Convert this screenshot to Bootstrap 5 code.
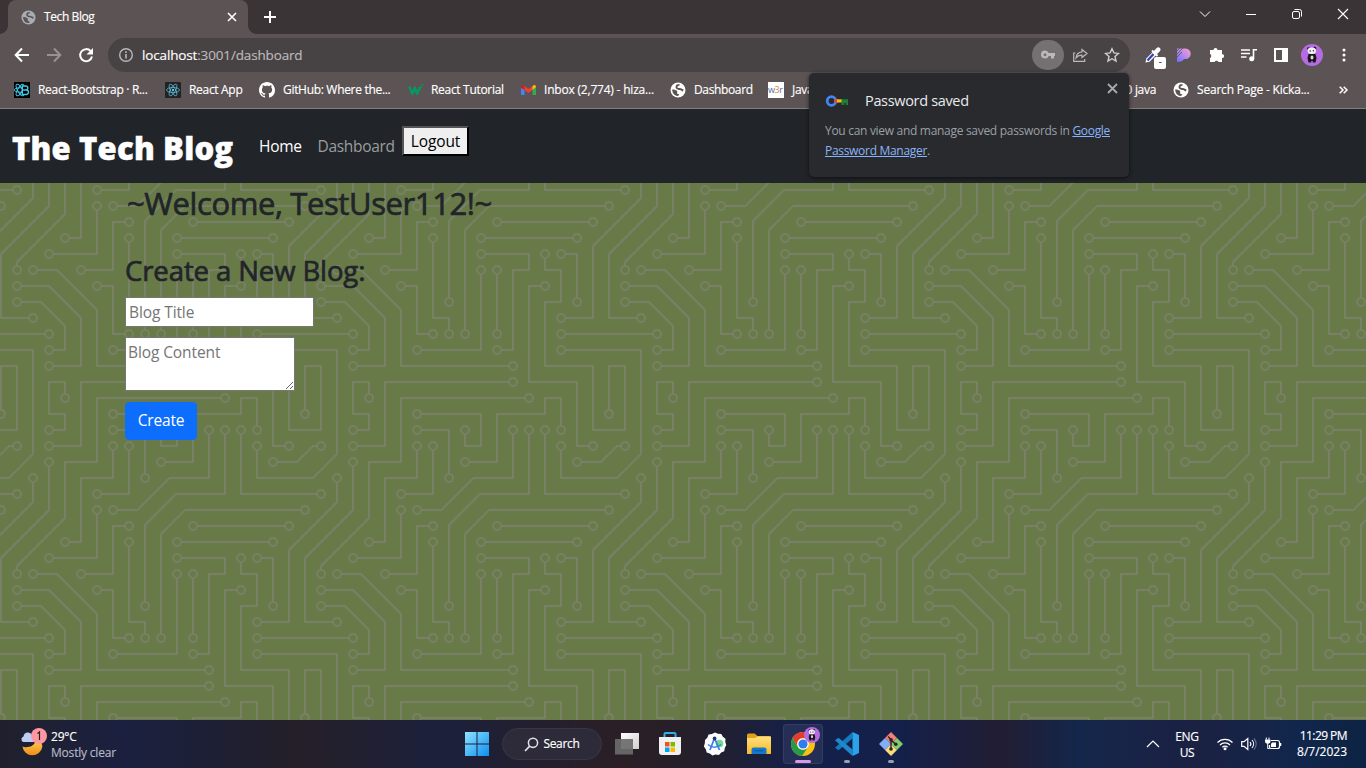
<!DOCTYPE html>
<html lang="en">
<head>
<meta charset="utf-8">
<meta name="viewport" content="width=device-width, initial-scale=1">
<title>Tech Blog</title>
<link href="https://cdn.jsdelivr.net/npm/bootstrap@5.3.0/dist/css/bootstrap.min.css" rel="stylesheet">
<style>
  body { font-family: "Open Sans", "Noto Sans", sans-serif; height: 768px; overflow: hidden; background: #5c5354; }
  svg { display: block; flex: none; overflow: visible; }
  .ui { font-size: 12px; line-height: 16px; letter-spacing: -.31px; white-space: nowrap; color: #fff; -webkit-text-stroke: .15px; }

  /* browser tab strip */
  .strip { height: 34px; background: #3b3436; padding-left: 8px; }
  .tab { width: 240px; background: #5c5354; border-radius: 8px 8px 0 0; padding: 0 10px 0 13px; position: relative; }
  .tab::before, .tab::after { content: ""; position: absolute; bottom: 0; width: 8px; height: 8px; }
  .tab::before { left: -8px; background: radial-gradient(circle at 0 0, transparent 7.5px, #5c5354 8px); }
  .tab::after { right: -8px; background: radial-gradient(circle at 100% 0, transparent 7.5px, #5c5354 8px); }
  .winctl { gap: 30px; padding: 0 15px 6px 0; }

  /* toolbar */
  .tools { height: 42px; padding: 0 14px; }
  .omni { width: 1022px; height: 34px; border-radius: 17px; background: #474243; margin-left: 14px; padding: 0 10px 0 10px; }
  .url { font-size: 13.5px; letter-spacing: -.15px; color: #bdb9ba; margin-left: 8px; }
  .keydot { width: 32px; height: 30px; border-radius: 16px; background: #757071; }
  .badge-dash { position: absolute; left: 10px; top: 11px; width: 12px; height: 12px; border-radius: 2px; background: #fff; color: #333; font-size: 9px; line-height: 10px; text-align: center; }

  /* bookmarks */
  .marks { height: 33px; padding: 0 0 4px 14px; border-bottom: 1px solid #837c7d; display: grid; grid-template-columns: 151px 94px 149px 113px 149px 98px 345px 60px 166px auto; align-items: center; }
  .marks > div { display: flex; align-items: center; gap: 8px; overflow: hidden; }

  /* password bubble */
  .bubble { position: absolute; left: 809px; top: 73px; width: 320px; height: 104px; background: #292a2d; border-radius: 5px; padding: 18px 16px 0; box-shadow: 0 1px 4px rgba(0,0,0,.6); z-index: 5; }
  .bubble h6 { font-size: 14.5px; line-height: 20px; font-weight: 400; letter-spacing: -.33px; color: #e8eaed; margin: 0 0 0 16px; }
  .bubble p { font-size: 12px; line-height: 20px; letter-spacing: -.3px; color: #9aa0a6; margin: 10px 0 0; white-space: nowrap; }
  .bubble a { color: #8ab4f8; }
  .bubble-x { position: absolute; right: 11px; top: 10px; }

  /* page */
  .page { height: 611px; background-color: #687a48; background-image: url("data:image/svg+xml,%3Csvg xmlns='http://www.w3.org/2000/svg' width='304' height='304' viewBox='0 0 304 304'%3E%3Cpath fill='%23788066' d='M44.1 224a5 5 0 1 1 0 2H0v-2h44.1zm160 48a5 5 0 1 1 0 2H82v-2h122.1zm57.8-46a5 5 0 1 1 0-2H304v2h-42.1zm0 16a5 5 0 1 1 0-2H304v2h-42.1zm6.2-114a5 5 0 1 1 0 2h-86.2a5 5 0 1 1 0-2h86.2zm-256-48a5 5 0 1 1 0 2H0v-2h12.1zm185.8 34a5 5 0 1 1 0-2h86.2a5 5 0 1 1 0 2h-86.2zM258 12.1a5 5 0 1 1-2 0V0h2v12.1zm-64 208a5 5 0 1 1-2 0v-54.2a5 5 0 1 1 2 0v54.2zm48-198.2V80h62v2h-64V21.9a5 5 0 1 1 2 0zm16 16V64h46v2h-48V37.9a5 5 0 1 1 2 0zm-128 96V208h16v12.1a5 5 0 1 1-2 0V210h-16v-76.1a5 5 0 1 1 2 0zm-5.9-21.9a5 5 0 1 1 0 2H114v48H85.9a5 5 0 1 1 0-2H112v-48h12.1zm-6.2 130a5 5 0 1 1 0-2H176v-74.1a5 5 0 1 1 2 0V242h-60.1zm-16-64a5 5 0 1 1 0-2H114v48h10.1a5 5 0 1 1 0 2H112v-48h-10.1zM66 284.1a5 5 0 1 1-2 0V274H50v30h-2v-32h18v12.1zM236.1 176a5 5 0 1 1 0 2H226v94h48v32h-2v-30h-48v-98h12.1zm25.8-30a5 5 0 1 1 0-2H274v44.1a5 5 0 1 1-2 0V146h-10.1zm-64 96a5 5 0 1 1 0-2H208v-80h16v-14h-42.1a5 5 0 1 1 0-2H226v18h-16v80h-12.1zm86.2-210a5 5 0 1 1 0 2H272V0h2v32h10.1zM98 101.9V146H53.9a5 5 0 1 1 0-2H96v-42.1a5 5 0 1 1 2 0zM53.9 34a5 5 0 1 1 0-2H80V0h2v34H53.9zm60.1 3.9V66H82v64H69.9a5 5 0 1 1 0-2H80V64h32V37.9a5 5 0 1 1 2 0zM101.9 82a5 5 0 1 1 0-2H128V37.9a5 5 0 1 1 2 0V82h-28.1zm16-64a5 5 0 1 1 0-2H146v44.1a5 5 0 1 1-2 0V18h-26.1zm102.2 270a5 5 0 1 1 0 2H98v14h-2v-16h124.1zM242 149.9V160h16v34h-16v62h48v48h-2v-46h-48v-66h16v-30h-16v-12.1a5 5 0 1 1 2 0zM53.9 18a5 5 0 1 1 0-2H64V2H48V0h18v18H53.9zm112 32a5 5 0 1 1 0-2H192V0h50v2h-48v48h-28.1zm-48-48a5 5 0 0 1-9.8-2h2.07a3 3 0 1 0 5.66 0H178v34h-18V21.9a5 5 0 1 1 2 0V32h14V2h-58.1zm0 96a5 5 0 1 1 0-2H137l32-32h39V21.9a5 5 0 1 1 2 0V66h-40.17l-32 32H117.9zm28.1 90.1a5 5 0 1 1-2 0v-76.51L175.59 80H224V21.9a5 5 0 1 1 2 0V82h-49.59L146 112.41v75.69zm16 32a5 5 0 1 1-2 0v-99.51L184.59 96H300.1a5 5 0 0 1 3.9-3.9v2.07a3 3 0 0 0 0 5.66v2.07a5 5 0 0 1-3.9-3.9H185.41L162 121.41v98.69zm-144-64a5 5 0 1 1-2 0v-3.51l48-48V48h32V0h2v50H66v55.41l-48 48v2.69zM50 53.9v43.51l-48 48V208h26.1a5 5 0 1 1 0 2H0v-65.41l48-48V53.9a5 5 0 1 1 2 0zm-16 16V89.41l-34 34v-2.82l32-32V69.9a5 5 0 1 1 2 0zM12.1 32a5 5 0 1 1 0 2H9.41L0 43.41V40.6L8.59 32h3.51zm265.8 18a5 5 0 1 1 0-2h18.69l7.41-7.41v2.82L297.41 50H277.9zm-16 160a5 5 0 1 1 0-2H288v-71.41l16-16v2.82l-14 14V210h-28.1zm-208 32a5 5 0 1 1 0-2H64v-22.59L40.59 194H21.9a5 5 0 1 1 0-2H41.41L66 216.59V242H53.9zm150.2 14a5 5 0 1 1 0 2H96v-56.6L56.6 162H37.9a5 5 0 1 1 0-2h19.5L98 200.6V256h106.1zm-150.2 2a5 5 0 1 1 0-2H80v-46.59L48.59 178H21.9a5 5 0 1 1 0-2H49.41L82 208.59V258H53.9zM34 39.8v1.61L9.41 66H0v-2h8.59L32 40.59V0h2v39.8zM2 300.1a5 5 0 0 1 3.9 3.9H3.83A3 3 0 0 0 0 302.17V256h18v48h-2v-46H2v42.1zM34 241v63h-2v-62H0v-2h34v1zM17 18H0v-2h16V0h2v18h-1zm273-2h14v2h-16V0h2v16zm-32 273v15h-2v-14h-14v14h-2v-16h18v1zM0 92.1A5.02 5.02 0 0 1 6 97a5 5 0 0 1-6 4.9v-2.07a3 3 0 1 0 0-5.66V92.1zM80 272h2v32h-2v-32zm37.9 32h-2.07a3 3 0 0 0-5.66 0h-2.07a5 5 0 0 1 9.8 0zM5.9 0A5.02 5.02 0 0 1 0 5.9V3.83A3 3 0 0 0 3.83 0H5.9zm294.2 0h2.07A3 3 0 0 0 304 3.83V5.9a5 5 0 0 1-3.9-5.9zm3.9 300.1v2.07a3 3 0 0 0-1.83 1.83h-2.07a5 5 0 0 1 3.9-3.9z'/%3E%3Cpath stroke='%23687a48' stroke-width='6' stroke-linecap='round' d='M49 225h0M209 273h0M257 225h0M257 241h0M273 129h0M177 129h0M17 81h0M193 113h0M289 113h0M257 17h0M193 225h0M193 161h0M241 17h0M257 33h0M129 129h0M145 225h0M129 113h0M81 161h0M113 241h0M177 161h0M97 177h0M129 225h0M65 289h0M241 177h0M257 145h0M273 193h0M193 241h0M177 145h0M289 33h0M49 145h0M97 97h0M49 33h0M113 33h0M65 129h0M97 81h0M129 33h0M113 17h0M145 65h0M225 289h0M241 145h0M49 17h0M161 49h0M161 17h0M113 97h0M209 17h0M145 193h0M225 17h0M161 225h0M17 161h0M49 49h0M33 209h0M33 65h0M17 33h0M273 49h0M257 209h0M49 241h0M17 193h0M209 257h0M33 161h0M49 257h0M17 177h0'/%3E%3C/svg%3E"); }
  .topnav { height: 74px; background: #212529; padding: 0 12px; }
  .brandname { font-size: 31px; font-weight: 800; letter-spacing: .2px; line-height: 48px; color: #fff; width: 231px; white-space: nowrap; padding-top: 3px; -webkit-text-stroke: .5px; }
  .navtxt { font-size: 15.5px; line-height: 24px; letter-spacing: -.3px; padding: 0 8px; }
  .logout { font-size: 15.5px; line-height: 24px; letter-spacing: -.1px; width: 67px; height: 30px; padding: 0; background: #efefef; border: 2px outset #000; border-color: #555 #000 #000 #555; color: #000; margin-bottom: 11px; }
  .hello { font-size: 31px; line-height: 38px; font-weight: 400; letter-spacing: -.4px; margin: 1px 0 32px 2px; white-space: nowrap; -webkit-text-stroke: .7px; }
  .newblog { font-size: 27.5px; line-height: 34px; font-weight: 400; letter-spacing: -.1px; margin: 0 0 9px; white-space: nowrap; -webkit-text-stroke: .7px; }
  .fld { display: block; border: 1px solid #767676; border-radius: 0; font-size: 15.5px; line-height: 24px; letter-spacing: -.1px; background: #fff; }
  .fld::placeholder { color: #757575; opacity: 1; }
  .fld-title { width: 189px; height: 30px; padding: 1px 3px; margin-bottom: 10px; }
  .fld-body { width: 170px; height: 54px; padding: 2px; margin-bottom: 11px; overflow: hidden; }
  .create { width: 72px; height: 38px; padding: 0; font-size: 15.5px; letter-spacing: -.15px; background: #0d6efd; border-color: #0d6efd; border-radius: 4px; }

  /* taskbar */
  .taskbar { height: 48px; background: linear-gradient(90deg, #20202c 0, #1b2040 125px, #1c1f35 200px, #241f28 300px, #1b203b 440px, #2b1f25 620px, #241f2b 700px, #14204a 800px, #14204a 900px, #211d32 1000px, #14264b 1080px, #1b2142 1200px, #11264c 1300px, #0d2342 1366px); }
  .pill { width: 100px; height: 32px; border-radius: 16px; background: #2d2a39; border: 1px solid #393644; margin-left: 13px; }
  .appbox { width: 40px; height: 40px; border-radius: 4px; background: #252e54; box-shadow: inset 0 0 0 1px #343c60; margin-left: 12px; position: relative; }
  .runbar { position: absolute; bottom: 1px; left: 50%; height: 3px; width: 6px; margin-left: -3px; border-radius: 2px; background: #9a9db0; }
  .app { height: 40px; width: 24px; position: relative; display: flex; align-items: center; }
</style>
</head>
<body>
<svg width="0" height="0" class="position-absolute">
  <defs>
    <symbol id="globe" viewBox="0 0 16 16"><circle cx="8" cy="8" r="7.5" fill="currentColor"/><path d="M2.2 7.5c2 .1 3.300.3 4.700 1.300 1 .9-.1 1.700.3 2.700.4.8 1.700.2 2 1.100.1.800-1 1.300-1.900 1.300C4.500 13.700 2.200 11 2.200 7.500zM6.700 2.500c1-.4 2.500-.2 3.300.2-.4 1.200-2.200 1-2.600 2-.3 1.100 1.200 1.300 2.200 1.300 1.400 0 2.500 1 3.900 1.300-.1 1-.3 1.500-.6 2.200-1.200-.3-1.600-1.500-3-1.500-1.300 0-3.500-.6-4.200-2.100-.4-1.200.2-2.500 1-3.400z" fill="#5c5354"/></symbol>
    <symbol id="panda" viewBox="0 0 22 22"><circle cx="11" cy="11" r="11" fill="#b56ce0"/><path d="M7.500 10h7l1 4-1 4.500h-2.700v-1.500h-1.600v1.500H7.500l-1-4.500z" fill="#18151b"/><circle cx="7.600" cy="4.600" r="1.400" fill="#18151b"/><circle cx="13.800" cy="4.200" r="1.400" fill="#18151b"/><ellipse cx="10.800" cy="6.800" rx="4.200" ry="3.200" fill="#f4f1f4"/><circle cx="9.200" cy="7" r=".8" fill="#333"/><circle cx="12.400" cy="6.800" r=".8" fill="#333"/><ellipse cx="11" cy="13.500" rx="1.500" ry="2" fill="#ddd8de"/></symbol>
    <symbol id="atom" viewBox="0 0 16 16"><g fill="none" stroke="#61c8e5" stroke-width=".7"><ellipse cx="8" cy="8" rx="6.500" ry="2.500"/><ellipse cx="8" cy="8" rx="6.500" ry="2.500" transform="rotate(60 8 8)"/><ellipse cx="8" cy="8" rx="6.500" ry="2.500" transform="rotate(120 8 8)"/></g><circle cx="8" cy="8" r="1.200" fill="#61c8e5"/></symbol>
    <linearGradient id="win" x1="0" y1="0" x2="1" y2="1"><stop offset="0" stop-color="#8fe3ff"/><stop offset="1" stop-color="#0a8ff0"/></linearGradient>
    <linearGradient id="moon" x1="0" y1="0" x2="0" y2="1"><stop offset="0" stop-color="#ffcf4d"/><stop offset="1" stop-color="#f08a1a"/></linearGradient>
    <linearGradient id="swirl" x1="1" y1="0" x2="0" y2="1"><stop offset="0" stop-color="#ff9fc4"/><stop offset=".5" stop-color="#b78bef"/><stop offset="1" stop-color="#6a6cff"/></linearGradient>
    <linearGradient id="fold" x1="0" y1="0" x2="0" y2="1"><stop offset="0" stop-color="#ffe082"/><stop offset="1" stop-color="#f9b91f"/></linearGradient>
    <linearGradient id="pane" x1="0" y1="0" x2="1" y2="1"><stop offset="0" stop-color="#fff"/><stop offset="1" stop-color="#cfcfcf"/></linearGradient>
  </defs>
</svg>

<header class="ui">
  <div class="strip d-flex">
    <div class="tab d-flex align-items-center">
      <svg width="15" height="15" style="color:#a9acb1"><use href="#globe"/></svg>
      <span class="ms-2 flex-grow-1" style="letter-spacing:-.4px">Tech Blog</span>
      <svg width="12" height="12" viewBox="0 0 12 12"><path d="M2 2l8 8M10 2l-8 8" stroke="#fff" stroke-width="1.600"/></svg>
    </div>
    <svg class="align-self-center ms-3" width="12" height="12" viewBox="0 0 12 12"><path d="M6 0v12M0 6h12" stroke="#fff" stroke-width="2"/></svg>
    <div class="winctl d-flex align-items-center ms-auto">
      <svg width="16" height="16" viewBox="0 0 16 16"><path d="M3 5.500l5 5 5-5" fill="none" stroke="#fff"/></svg>
      <svg width="16" height="16" viewBox="0 0 16 16"><path d="M3 8.500h10" stroke="#fff"/></svg>
      <svg width="16" height="16" viewBox="0 0 16 16"><rect x="3.500" y="5.500" width="7" height="7" rx="1.500" fill="none" stroke="#fff"/><path d="M5.500 3.500h5a2 2 0 0 1 2 2v5" fill="none" stroke="#fff"/></svg>
      <svg width="16" height="16" viewBox="0 0 16 16"><path d="M3 3l10 10M13 3L3 13" stroke="#fff" stroke-width="1.100"/></svg>
    </div>
  </div>

  <div class="tools d-flex align-items-center">
    <svg width="16" height="16" viewBox="0 0 16 16"><path d="M15 8H2M8 1.500L1.700 8 8 14.500" fill="none" stroke="#fff" stroke-width="2"/></svg>
    <svg class="ms-3" width="16" height="16" viewBox="0 0 16 16"><path d="M1 8h13M8 1.500L14.300 8 8 14.500" fill="none" stroke="#989293" stroke-width="2"/></svg>
    <svg class="ms-3" width="16" height="16" viewBox="0 0 16 16"><path d="M12.700 4.200A6 6 0 1 0 14 9.500" fill="none" stroke="#fff" stroke-width="2"/><path d="M15 1v6.500H8.500z" fill="#fff"/></svg>
    <div class="omni d-flex align-items-center">
      <svg width="16" height="16" viewBox="0 0 16 16"><circle cx="8" cy="8" r="6.300" fill="none" stroke="#b9b6b7" stroke-width="1.400"/><path d="M8 7v4.500M8 4.200v1.700" stroke="#b9b6b7" stroke-width="1.600"/></svg>
      <span class="url"><span class="text-white">localhost</span>:3001/dashboard</span>
      <div class="keydot ms-auto d-flex align-items-center justify-content-center me-2">
        <svg width="16" height="16" viewBox="0 0 16 16"><path fill-rule="evenodd" d="M5 3.500a4 4 0 1 0 3.700 5.500H11v2.500h3V9h1V6H8.700A4 4 0 0 0 5 3.500zm0 2.700a1.500 1.500 0 1 1 0 3 1.500 1.500 0 0 1 0-3z" fill="#bcb9ba"/></svg>
      </div>
      <svg width="16" height="16" viewBox="0 0 16 16"><path d="M3.500 6H1.700v8.300h11V12M10 2.500l5 4-5 4V8.200C7.500 8 5.500 9 4 11c.3-3.500 2.300-5.800 6-6.200z" fill="none" stroke="#bcb9ba" stroke-width="1.200"/></svg>
      <svg class="ms-3" width="16" height="16" viewBox="0 0 16 16"><path d="M8 1.700l1.900 4.200 4.500.5-3.400 3.100 1 4.600-4-2.400-4 2.400 1-4.600L1.600 6.400l4.500-.5z" fill="none" stroke="#d0cdce" stroke-width="1.400"/></svg>
    </div>
    <div class="position-relative" style="margin-left:14px">
      <svg width="18" height="18" viewBox="0 0 18 18"><path d="M1.500 16.500l.8-4L9 5.800 12.200 9l-6.700 6.700z" fill="#fff"/><path d="M3.500 14.500L9.500 8" stroke="#3347b8" stroke-width="2.400"/><path d="M8 4.500L13.500 10" stroke="#fff" stroke-width="2"/><path d="M11.500 6.500L14.300 3.700" stroke="#fff" stroke-width="4.500" stroke-linecap="round"/></svg>
      <span class="badge-dash">-</span>
    </div>
    <svg style="margin-left:14px" width="16" height="16" viewBox="0 0 16 16"><path d="M1 1.500h8.500a5 5 0 0 1 0 10.500H8c-1 2-3.500 3-7 3z" fill="url(#swirl)"/><path d="M0 5l5-5M0 8l8-8M0 11L6 5" stroke="#5c5354" stroke-width=".9"/></svg>
    <svg style="margin-left:17px" width="16" height="16" viewBox="0 0 16 16"><path d="M6.500 1a2 2 0 0 1 2 2H13v4.300a2 2 0 0 1 0 3.600V15H9.500a2.200 2.200 0 0 0-4 0H1v-4a2.200 2.200 0 0 0 0-4V3h3.500a2 2 0 0 1 2-2z" fill="#fff"/><circle cx="13.300" cy="9.100" r="1.900" fill="#fff"/></svg>
    <svg class="ms-3" width="16" height="16" viewBox="0 0 16 16"><path d="M0 3h9M0 6.500h9M0 10h5.500M12.500 12V2.800H16" fill="none" stroke="#fff" stroke-width="1.600"/><circle cx="10.700" cy="11.800" r="2.500" fill="#fff"/></svg>
    <svg class="ms-3" width="16" height="16" viewBox="0 0 16 16"><path fill-rule="evenodd" d="M1 1h14v14H1zm2 2v10h6V3z" fill="#fff"/></svg>
    <svg style="margin-left:12px" width="22" height="22"><use href="#panda"/></svg>
    <svg style="margin-left:13px" width="16" height="16" viewBox="0 0 16 16"><g fill="#fff"><circle cx="8" cy="3" r="1.500"/><circle cx="8" cy="8" r="1.500"/><circle cx="8" cy="13" r="1.500"/></g></svg>
  </div>

  <nav class="marks">
    <div><svg width="16" height="16" viewBox="0 0 16 16"><rect width="16" height="16" fill="#000"/><g fill="none" stroke="#41c9e8"><ellipse cx="6" cy="8" rx="5.800" ry="2.200"/><ellipse cx="6" cy="8" rx="6.500" ry="2.300" transform="rotate(60 6 8)"/><ellipse cx="6" cy="8" rx="6.500" ry="2.300" transform="rotate(-60 6 8)"/></g><path d="M8.300 4h3.500a2 2 0 0 1 0 4H8.300zM8.300 8h4a2.200 2.200 0 0 1 0 4.500h-4z" fill="#000" stroke="#41c9e8" stroke-width="1.400"/></svg><span>React-Bootstrap · R...</span></div>
    <div><svg width="16" height="16"><rect width="16" height="16" rx="1" fill="#222"/><use href="#atom"/></svg><span>React App</span></div>
    <div><svg width="16" height="16" viewBox="0 0 16 16"><path fill="#fff" d="M8 0C3.580 0 0 3.580 0 8c0 3.540 2.290 6.530 5.470 7.590.4.070.55-.17.55-.38 0-.19-.01-.82-.01-1.490-2.010.37-2.530-.49-2.690-.94-.09-.23-.48-.94-.82-1.130-.28-.15-.68-.52-.01-.53.63-.01 1.080.58 1.230.82.72 1.210 1.870.87 2.330.66.070-.52.280-.87.510-1.070-1.780-.2-3.640-.89-3.640-3.950 0-.87.310-1.590.82-2.150-.08-.2-.36-1.020.08-2.120 0 0 .67-.21 2.200.82.64-.18 1.320-.27 2-.27s1.360.09 2 .27c1.530-1.040 2.200-.82 2.200-.82.44 1.100.16 1.920.08 2.120.51.560.82 1.270.82 2.150 0 3.070-1.870 3.750-3.650 3.950.29.25.54.73.54 1.480 0 1.070-.01 1.930-.01 2.200 0 .21.15.46.55.38A8.010 8.010 0 0 0 16 8c0-4.420-3.580-8-8-8z"/></svg><span>GitHub: Where the...</span></div>
    <div><svg width="16" height="16" viewBox="0 0 16 16"><path d="M0 4.500h2.700L4.300 8.500 6 4.500h1.500l1.800 4 1.700-4h2.500L10 13H8.500L6.700 9.500 5 13H3.500z" fill="#059862"/><path d="M13 2.500h2l-1 1.200c1 0 1.300 1.800-.8 1.800" fill="none" stroke="#059862" stroke-width=".8"/></svg><span style="margin-left:-1px">React Tutorial</span></div>
    <div><svg width="15" height="16" viewBox="0 0 15 16"><path d="M0 4v9h3.500V7z" fill="#4285f4"/><path d="M15 4v9h-3.500V7z" fill="#34a853"/><path d="M0 4.500L2 3l5.500 4L13 3l-1 4.500-4.500 3.500L0 5.500z" fill="#ea4335"/><path d="M11.500 4.200L13 3c1 0 2 .5 2 2l-3.500 3z" fill="#fbbc04"/><path d="M0 4.500c0-1.500 2-2 2.500-1.200l1 1v3.800L0 5.500z" fill="#c5221f"/></svg><span style="letter-spacing:-.2px">Inbox (2,774) - hiza...</span></div>
    <div><svg width="16" height="16" class="text-white"><use href="#globe"/></svg><span style="letter-spacing:-.36px">Dashboard</span></div>
    <div><svg width="16" height="16" viewBox="0 0 16 16"><rect width="16" height="16" fill="#fff"/><text x="0" y="11" font-size="9" letter-spacing="-.4" fill="#3f6fb0">w<tspan fill="#e77c40">3</tspan>r</text></svg><span>Java</span></div>
    <div class="justify-content-end" style="padding-right:17px"><span>20 java</span></div>
    <div><svg width="16" height="16" class="text-white"><use href="#globe"/></svg><span style="letter-spacing:-.2px">Search Page - Kicka...</span></div>
    <div><svg width="9" height="8" viewBox="0 0 9 8"><path d="M.7.700L4 4 .7 7.300M4.700.700L8 4 4.700 7.300" fill="none" stroke="#fff" stroke-width="1.500"/></svg></div>
  </nav>
</header>

<aside class="bubble">
  <div class="d-flex align-items-center">
    <svg width="24" height="20" viewBox="0 0 24 20"><circle cx="6.500" cy="10" r="4.300" fill="none" stroke="#4285f4" stroke-width="2.800"/><path d="M9 8.300h4v3.200H9z" fill="#ea4335"/><path d="M12 8.300h5v3.200h-5z" fill="#fbbc04"/><path d="M16.500 8.300h6.500V14h-2.200v-2h-1.500v2h-2.800z" fill="#188038"/></svg>
    <h6>Password saved</h6>
  </div>
  <p>You can view and manage saved passwords in <a href="#">Google<br>Password Manager</a>.</p>
  <svg class="bubble-x" width="11" height="11" viewBox="0 0 11 11"><path d="M1 1l9 9M10 1l-9 9" stroke="#a4a8ad" stroke-width="1.900"/></svg>
</aside>

<div class="page">
  <nav class="topnav d-flex align-items-center">
    <div class="brandname">The Tech Blog</div>
    <div class="d-flex align-items-center" style="margin-left:8px">
      <div class="navtxt text-white" style="width:58.500px">Home</div>
      <div class="navtxt" style="width:92.500px;color:#9b9d9e">Dashboard</div>
      <button class="logout">Logout</button>
    </div>
  </nav>
  <main class="container">
    <h2 class="hello">~Welcome, TestUser112!~</h2>
    <h3 class="newblog">Create a New Blog:</h3>
    <input class="fld fld-title" placeholder="Blog Title">
    <textarea class="fld fld-body" placeholder="Blog Content"></textarea>
    <button class="btn btn-primary create">Create</button>
  </main>
</div>

<footer class="taskbar ui d-flex align-items-center">
  <div class="d-flex align-items-center" style="width:465px;padding-left:20px">
    <svg style="margin-top:-5px" width="27" height="28" viewBox="0 0 27 28"><path d="M2.500 18.500c3 1.500 12 1 13-6 1.500-1 7 .5 6.800 6.500A10 10 0 0 1 2.500 18.500z" fill="url(#moon)"/><path d="M3 14a3 3 0 0 1 .5-5.500 4.500 4.500 0 0 1 8.500-1.500 3.500 3.500 0 0 1 1 7z" fill="#b9cdf5"/><circle cx="19" cy="8" r="8" fill="#ff97a0"/><path d="M17.500 5.500L19.500 4v8" fill="none" stroke="#222" stroke-width="1.200"/></svg>
    <div style="margin-left:4px;letter-spacing:-.2px;padding-top:2px"><div>29°C</div><div style="color:#b7b8c4">Mostly clear</div></div>
  </div>
  <svg width="24" height="24" viewBox="0 0 24 24"><path d="M0 0h11.500v11.500H0zM12.500 0H24v11.500H12.500zM0 12.500h11.500V24H0zM12.500 12.500H24V24H12.500z" fill="url(#win)"/></svg>
  <div class="pill d-flex align-items-center justify-content-center">
    <svg width="15" height="15" viewBox="0 0 15 15"><circle cx="9" cy="5.800" r="4.600" fill="none" stroke="#e4e3ea" stroke-width="1.500"/><path d="M5.700 9.200L1 14" stroke="#e4e3ea" stroke-width="1.700"/></svg>
    <span style="margin-left:4px">Search</span>
  </div>
  <svg style="margin-left:13px" width="24" height="24" viewBox="0 0 24 24"><path d="M6 1h18v16H6z" fill="url(#pane)"/><path d="M0 7h18v15.500H0z" fill="#6b6b6b" opacity=".92"/></svg>
  <svg style="margin-left:19px" width="24" height="24" viewBox="0 0 24 24"><path d="M6.500 6V2a1 1 0 0 1 1-1h9a1 1 0 0 1 1 1v4" fill="none" stroke="#2fb0ea" stroke-width="2"/><path d="M1 5h22v15a3 3 0 0 1-3 3H4a3 3 0 0 1-3-3z" fill="#f0f0f0"/><path d="M7 10h4.500v4.500H7z" fill="#f25022"/><path d="M12.500 10H17v4.500h-4.500z" fill="#7fba00"/><path d="M7 15.500h4.500V20H7z" fill="#00a4ef"/><path d="M12.500 15.500H17V20h-4.500z" fill="#ffb900"/></svg>
  <svg style="margin-left:21px" width="24" height="24" viewBox="0 0 24 24"><path d="M12 .5l3 1.300 3.300.2 1.600 2.800 2.600 2-.2 3.300 1 3-1.500 2.900-.6 3.200-3 1.400-2.300 2.300-3.300-.3-3.200.8-2.600-2-3.100-1-.900-3.200-1.900-2.700.9-3.200L2 8l2.300-2.300L5.600 2.600l3.300-.5z" fill="#fdfdfd"/><circle cx="16.500" cy="11.500" r="3.800" fill="#6fdc8c"/><path d="M11.500 6L7 18M11.500 6l5 12" fill="none" stroke="#3b7de8" stroke-width="1.700"/><path d="M5 12.500c4 3.500 9 3.500 13 0" fill="none" stroke="#3b7de8" stroke-width="1.400"/><circle cx="11.600" cy="6.500" r="1.900" fill="#1e3c6e"/></svg>
  <svg style="margin-left:20px" width="24" height="24" viewBox="0 0 24 24"><path d="M0 3a1.500 1.500 0 0 1 1.500-1.500h6L10.500 4H22a2 2 0 0 1 2 2v6H0z" fill="#e5a019"/><path d="M0 6h8l2.500-1.500H24V22H0z" fill="url(#fold)"/><path d="M4.500 22v-4.500A2 2 0 0 1 6.500 15.500h11a2 2 0 0 1 2 2V22z" fill="#1478cf"/><path d="M7.500 18.700h9" stroke="#0d5ca8" stroke-width="1.300"/></svg>
  <div class="appbox d-flex align-items-center justify-content-center">
    <svg width="24" height="24" viewBox="0 0 24 24"><circle cx="12" cy="12" r="12" fill="#fbc116"/><path d="M1.600 6A12 12 0 0 1 22.400 6H12a6 6 0 0 0-5.200 9z" fill="#e33b2e"/><path d="M1.600 6a12 12 0 0 0 9.400 18l6-9a6 6 0 0 1-10.200 0z" fill="#239b4b"/><circle cx="12" cy="12" r="5.800" fill="#fff"/><circle cx="12" cy="12" r="4.600" fill="#2f7ded"/></svg>
    <svg class="position-absolute" style="left:21px;top:3px" width="16" height="16"><use href="#panda"/></svg>
    <span class="runbar" style="width:16px;margin-left:-8px;background:#d79be6"></span>
  </div>
  <div class="app" style="margin-left:12px">
    <svg width="24" height="24" viewBox="0 0 24 24"><path d="M17.500 0v6.500L3.500 18.200 0 15.800z" fill="#1579bd"/><path d="M17.500 24v-6.500L3.500 5.800 0 8.200z" fill="#1e88cf"/><path d="M17.500 0L24 3v18l-6.500 3z" fill="#2ba3ea"/></svg>
    <span class="runbar"></span>
  </div>
  <div class="app" style="margin-left:20px">
    <svg width="24" height="24" viewBox="0 0 24 24"><path d="M12 0l6 6-6 6-6-6z" fill="#f07f7a"/><path d="M6 6l6 6-6 6-6-6z" fill="#80aef8"/><path d="M18 6l6 6-6 6-6-6z" fill="#82cc6c"/><path d="M12 12l6 6-6 6-6-6z" fill="#f9dc7b"/><path d="M9 4.500l3 3v10M12 8l5 4.500" fill="none" stroke="#2b2523" stroke-width="1.400"/><circle cx="12" cy="7.800" r="1.800" fill="#2b2523"/><circle cx="12" cy="17" r="1.800" fill="#2b2523"/><circle cx="16.800" cy="12.300" r="1.800" fill="#2b2523"/></svg>
    <span class="runbar"></span>
  </div>
  <div class="d-flex align-items-center ms-auto" style="padding-right:19px">
    <svg width="14" height="14" viewBox="0 0 14 14"><path d="M1 10l6-6 6 6" fill="none" stroke="#fff" stroke-width="1.200"/></svg>
    <div class="text-center" style="width:24px;margin-left:15px;padding-top:2px">ENG<br>US</div>
    <svg style="margin-left:18px" width="16" height="16" viewBox="0 0 16 16"><path d="M.5 6.500a10.500 10.500 0 0 1 15 0M3 9a7 7 0 0 1 10 0M5.400 11.300a3.700 3.700 0 0 1 5.200 0" fill="none" stroke="#fff" stroke-width="1.300"/><circle cx="8" cy="12.800" r="1.500" fill="#fff"/></svg>
    <svg style="margin-left:8px" width="16" height="16" viewBox="0 0 16 16"><path d="M.7 5.700H3L6.800 2.500v11L3 10.300H.7z" fill="none" stroke="#fff" stroke-width="1.200"/><path d="M9 6a3 3 0 0 1 0 4M11 4a6 6 0 0 1 0 8" fill="none" stroke="#fff" stroke-width="1.100"/><path d="M13 2.500a8 8 0 0 1 0 11" fill="none" stroke="#6c7086" stroke-width="1.100"/></svg>
    <svg style="margin-left:8px" width="17" height="14" viewBox="0 0 17 14"><path d="M6 3.500h6.500a2 2 0 0 1 2 2v4a2 2 0 0 1-2 2H6a1.500 1.500 0 0 1-1.500-1.500V8" fill="none" stroke="#fff" stroke-width="1.200"/><path d="M15.500 6v3" stroke="#fff" stroke-width="1.500"/><path d="M7 5.500h4v4.500H6V7z" fill="#fff"/><path d="M0 2.500h5.500V4a2.700 2.700 0 0 1-5.500 0z" fill="#fff"/><path d="M1.300.500v2M4 .500v2M2.700 6v5.500h2" stroke="#fff" fill="none"/></svg>
    <div class="d-flex flex-column align-items-end" style="width:57px;margin-left:8px"><span style="letter-spacing:-.55px">11:29 PM</span><span style="letter-spacing:0">8/7/2023</span></div>
  </div>
</footer>
<script src="https://cdn.jsdelivr.net/npm/bootstrap@5.3.0/dist/js/bootstrap.bundle.min.js"></script>
</body>
</html>
